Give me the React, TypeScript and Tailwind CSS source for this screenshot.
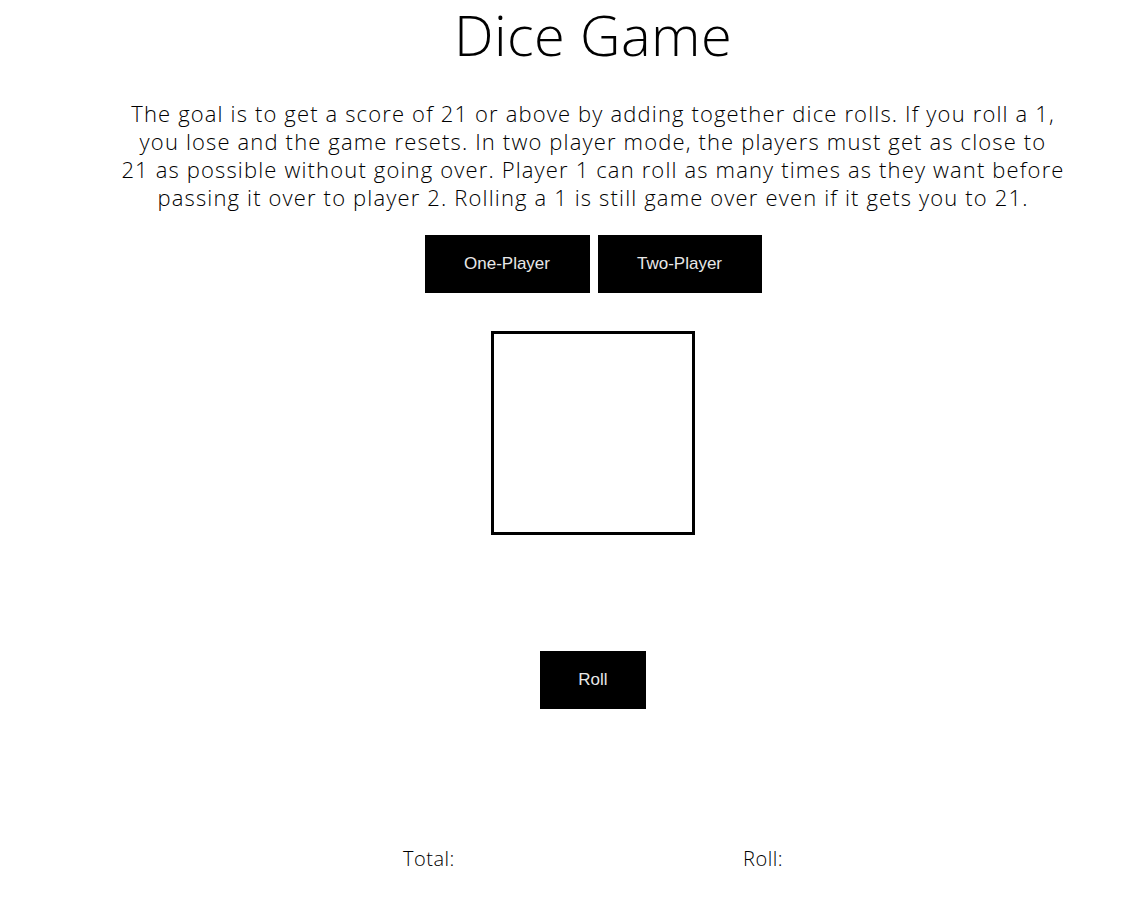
import React from "react";

export default function App() {
  const body = { fontFamily: '"Open Sans", Inter, sans-serif' };
  return (
    <div className="min-h-[908px] w-full bg-white text-black pl-[38px]" style={body}>
      <div className="flex flex-col items-center">
        <h1 className="pt-[2px] text-[56px] leading-[64px] font-light tracking-[0.4px]">Dice Game</h1>
        <p className="mt-[33px] text-center text-[22px] leading-[28px] font-light tracking-[1.15px]">
          The goal is to get a score of 21 or above by adding together dice rolls. If you roll a 1,
          <br />
          you lose and the game resets. In two player mode, the players must get as close to
          <br />
          21 as possible without going over. Player 1 can roll as many times as they want before
          <br />
          passing it over to player 2. Rolling a 1 is still game over even if it gets you to 21.
        </p>
        <div className="mt-[24px] flex gap-[8px]" style={{ fontFamily: '"Liberation Sans", Arial, sans-serif' }}>
          <button className="h-[58px] w-[165px] bg-black text-[17px] text-[#e8e8e8]">One-Player</button>
          <button className="h-[58px] w-[164px] bg-black text-[17px] text-[#e8e8e8]">Two-Player</button>
        </div>
        <div className="mt-[38px] h-[204px] w-[204px] border-[3px] border-black" />
        <button
          className="mt-[116px] h-[58px] w-[106px] bg-black text-[17px] text-[#e8e8e8]"
          style={{ fontFamily: '"Liberation Sans", Arial, sans-serif' }}
        >
          Roll
        </button>
        <div className="mt-[136px] flex w-[380px] justify-between text-[20px] font-light leading-[28px] tracking-[0.5px]">
          <span>Total:</span>
          <span>Roll:</span>
        </div>
      </div>
    </div>
  );
}
